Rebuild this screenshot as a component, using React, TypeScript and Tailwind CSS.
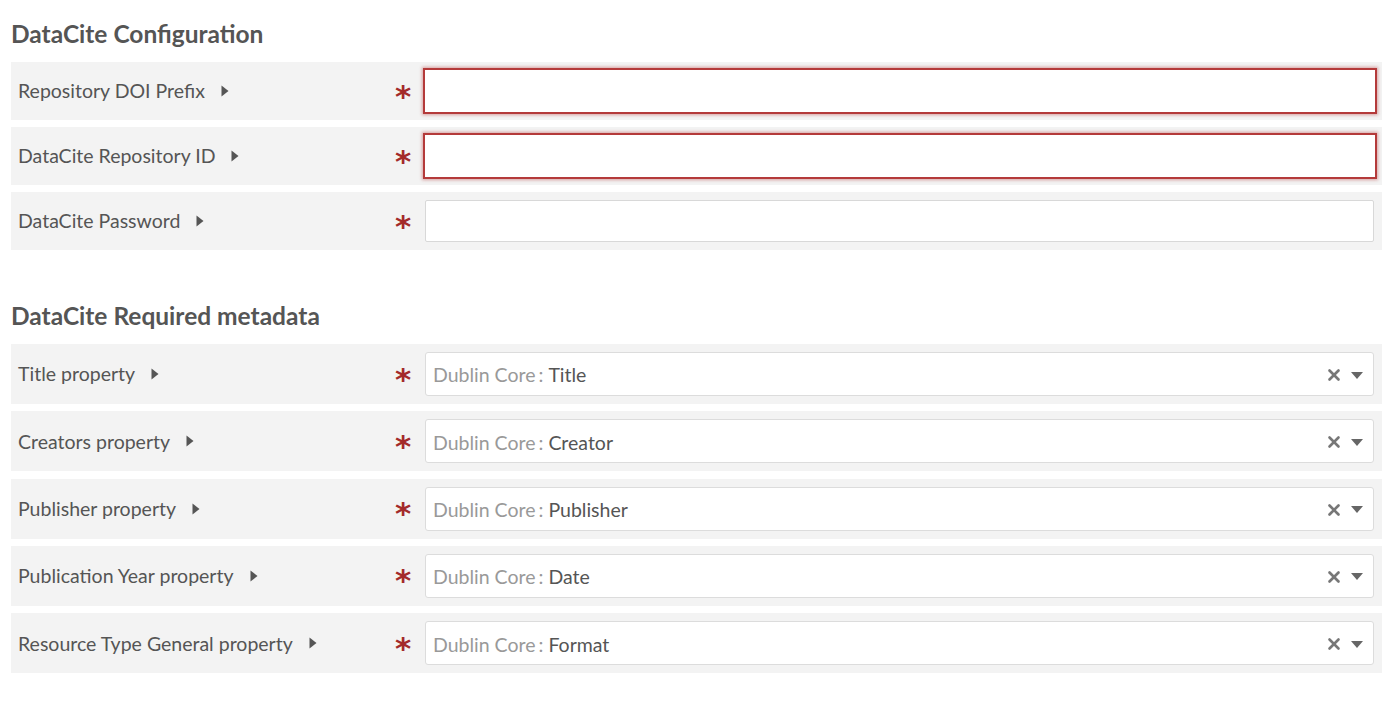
import { X } from "lucide-react";

const Caret = () => (
  <svg width="8" height="12" viewBox="0 0 8 12" className="ml-[16px] shrink-0">
    <path d="M0.5 0.5 L7.5 6 L0.5 11.5 Z" fill="#555" />
  </svg>
);

const Asterisk = () => (
  <span className="w-[34px] shrink-0 text-center text-[31px] leading-none font-bold text-[#a32a2a] pt-[10px] [font-family:'DejaVu_Sans',sans-serif]">
    *
  </span>
);

const TextRow = ({ label, invalid }: { label: string; invalid?: boolean }) => (
  <div className="flex items-center h-[58px] bg-[#f3f3f3] pl-[7px] pr-[5px]">
    <div className="flex items-center w-[368px] text-[19.5px] text-[#555]">
      {label}
      <Caret />
    </div>
    <Asterisk />
    {invalid ? (
      <div className="flex-1 h-[46px] ml-[3px] border-2 border-[#b43a3a] shadow-[0_0_3px_1px_rgba(180,58,58,0.45)] bg-white" />
    ) : (
      <div className="flex-1 h-[42px] ml-[5px] mr-[3px] border border-[#d8d8d8] rounded-[2px] bg-white" />
    )}
  </div>
);

const SelectRow = ({ label, value }: { label: string; value: string }) => (
  <div className="flex items-center h-[60px] bg-[#f3f3f3] pl-[7px] pr-2">
    <div className="flex items-center w-[368px] text-[19.5px] text-[#555]">
      {label}
      <Caret />
    </div>
    <Asterisk />
    <div className="flex-1 h-[44px] ml-[5px] border border-[#dcdcdc] rounded-[3px] bg-white flex items-center pl-[7px] pr-[10px] pt-[2px] text-[19.5px]">
      <span className="text-[#999]">Dublin Core</span>
      <span className="text-[#999] ml-[3px]">:</span>
      <span className="text-[#555] ml-[5px]">{value}</span>
      <div className="ml-auto flex items-center gap-[8px] text-[#777]">
        <X size={18} strokeWidth={3.5} />
        <svg width="12" height="7" viewBox="0 0 12 7">
          <path d="M0 0 H12 L6 7 Z" fill="#666" />
        </svg>
      </div>
    </div>
  </div>
);

export default function App() {
  return (
    <div className="w-[1400px] h-[716px] bg-white px-[11px] pr-[18px] [font-family:Lato,sans-serif]">
      <h2 className="pt-[19px] text-[24.5px] leading-[30px] font-bold text-[#555] mb-[13px]">
        DataCite Configuration
      </h2>
      <div className="flex flex-col gap-[7px]">
        <TextRow label="Repository DOI Prefix" invalid />
        <TextRow label="DataCite Repository ID" invalid />
        <TextRow label="DataCite Password" />
      </div>
      <h2 className="mt-[51px] text-[24.5px] leading-[30px] font-bold text-[#555] mb-[13px]">
        DataCite Required metadata
      </h2>
      <div className="flex flex-col gap-[7.3px]">
        <SelectRow label="Title property" value="Title" />
        <SelectRow label="Creators property" value="Creator" />
        <SelectRow label="Publisher property" value="Publisher" />
        <SelectRow label="Publication Year property" value="Date" />
        <SelectRow label="Resource Type General property" value="Format" />
      </div>
    </div>
  );
}
